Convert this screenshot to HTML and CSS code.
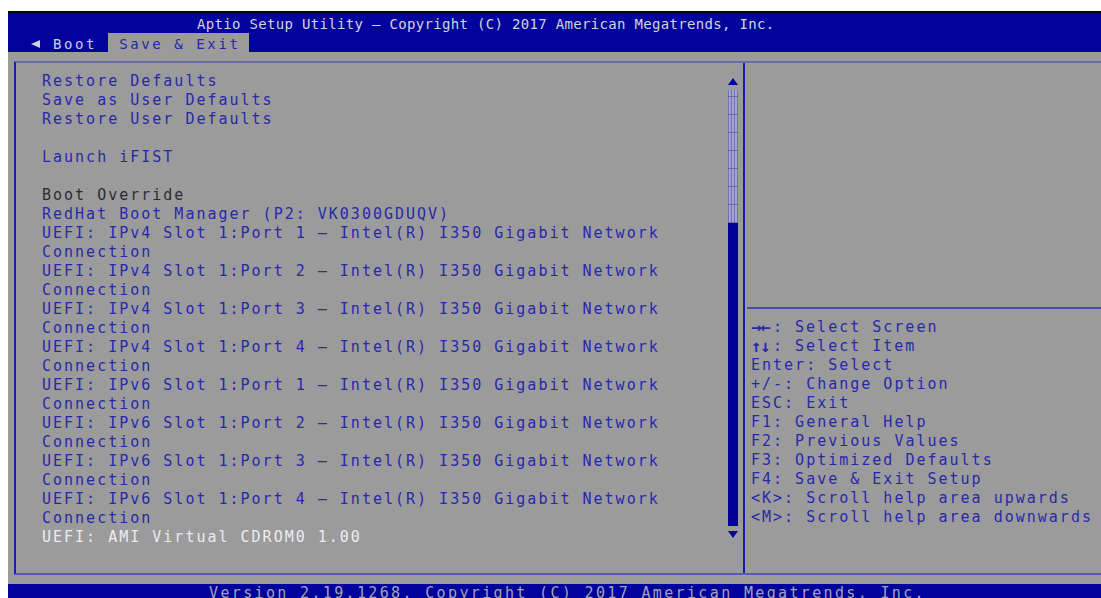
FILE: index.html
```html
<!DOCTYPE html>
<html lang="en">
<head>
<meta charset="utf-8">
<title>Aptio Setup Utility</title>
<link rel="stylesheet" href="styles.css">
</head>
<body>
<div class="screen">
  <header class="header">
    <div class="title">Aptio Setup Utility – Copyright (C) 2017 American Megatrends, Inc.</div>
    <nav class="tabs">
      <span class="tab-prev">
        <svg class="tab-arrow" width="9" height="8" viewBox="0 0 9 8"><polygon points="0,4 9,0 9,8" fill="currentColor"/></svg>
        <span class="tab-label">Boot</span>
      </span>
      <span class="tab-active">Save &amp; Exit</span>
    </nav>
  </header>

  <main class="main">
    <div class="frame">
      <section class="left-panel">
        <div class="menu">
          <ul class="group">
            <li>Restore Defaults</li>
            <li>Save as User Defaults</li>
            <li>Restore User Defaults</li>
          </ul>
          <ul class="group">
            <li>Launch iFIST</li>
          </ul>
          <ul class="group">
            <li class="heading">Boot Override</li>
            <li>RedHat Boot Manager (P2: VK0300GDUQV)</li>
            <li>UEFI: IPv4 Slot 1:Port 1 – Intel(R) I350 Gigabit Network Connection</li>
            <li>UEFI: IPv4 Slot 1:Port 2 – Intel(R) I350 Gigabit Network Connection</li>
            <li>UEFI: IPv4 Slot 1:Port 3 – Intel(R) I350 Gigabit Network Connection</li>
            <li>UEFI: IPv4 Slot 1:Port 4 – Intel(R) I350 Gigabit Network Connection</li>
            <li>UEFI: IPv6 Slot 1:Port 1 – Intel(R) I350 Gigabit Network Connection</li>
            <li>UEFI: IPv6 Slot 1:Port 2 – Intel(R) I350 Gigabit Network Connection</li>
            <li>UEFI: IPv6 Slot 1:Port 3 – Intel(R) I350 Gigabit Network Connection</li>
            <li>UEFI: IPv6 Slot 1:Port 4 – Intel(R) I350 Gigabit Network Connection</li>
            <li class="selected">UEFI: AMI Virtual CDROM0 1.00</li>
          </ul>
        </div>
        <div class="scrollbar">
          <span class="arrow-up"></span>
          <span class="track"></span>
          <span class="thumb"></span>
          <span class="arrow-down"></span>
        </div>
      </section>

      <div class="divider"></div>

      <aside class="right-panel">
        <div class="help-area"></div>
        <div class="separator"></div>
        <ul class="keys">
          <li><span class="arrows">→←</span>: Select Screen</li>
          <li><span class="arrows">↑↓</span>: Select Item</li>
          <li>Enter: Select</li>
          <li>+/-: Change Option</li>
          <li>ESC: Exit</li>
          <li>F1: General Help</li>
          <li>F2: Previous Values</li>
          <li>F3: Optimized Defaults</li>
          <li>F4: Save &amp; Exit Setup</li>
          <li>&lt;K&gt;: Scroll help area upwards</li>
          <li>&lt;M&gt;: Scroll help area downwards</li>
        </ul>
      </aside>
    </div>
  </main>

  <footer class="footer">Version 2.19.1268. Copyright (C) 2017 American Megatrends, Inc.</footer>
</div>
</body>
</html>
```

FILE: styles.css
```css
html, body {
  height: 100%;
}

body {
  margin: 11px 0 0 8px;
  background: #ffffff;
  overflow: hidden;
  font-family: "DejaVu Sans Mono", "Liberation Mono", monospace;
}

ul {
  list-style: none;
  margin: 0;
  padding: 0;
}

.screen {
  width: 1093px;
}

/* ---- top bar ---- */
.header {
  background: #02029c;
  border-top: 2px solid #05050f;
  height: 39px;
}

.title {
  height: 20px;
  box-sizing: border-box;
  padding: 2px 0 0 189px;
  font-size: 14px;
  line-height: 18px;
  letter-spacing: 0.32px;
  color: #d4d4dc;
  white-space: pre;
}

.tabs {
  display: flex;
  height: 19px;
  padding-left: 23px;
  font-size: 14px;
  letter-spacing: 2.6px;
  line-height: 18px;
}

.tab-prev {
  display: flex;
  align-items: center;
  color: #cfcfd8;
}

.tab-arrow {
  display: block;
  margin-top: 2px;
}

.tab-label {
  margin-left: 13px;
  padding-top: 2px;
}

.tab-active {
  margin-left: 11px;
  padding: 2px 9px 0 11px;
  background: #9b9b9b;
  color: #2626ac;
}

/* ---- main area ---- */
.main {
  height: 532px;
  box-sizing: border-box;
  padding: 9px 0 9px 6px;
  background: #9b9b9b;
}

.frame {
  display: grid;
  grid-template-columns: 727px 2px 1fr;
  grid-template-rows: 100%;
  height: 514px;
  box-sizing: border-box;
  overflow: hidden;
  border-top: 2px solid #6a6aa6;
  border-bottom: 2px solid #5a5aac;
  border-left: 2px solid #1c1cae;
  font-size: 15px;
  line-height: 19px;
  letter-spacing: 2px;
}

.left-panel {
  display: flex;
  min-height: 0;
}

.menu {
  flex: 1;
  padding: 9px 0 0 26px;
  color: #2828ac;
}

.group {
  margin-bottom: 19px;
}

.group li {
  padding-right: 20px;
}

.heading {
  color: #2c2c34;
}

.selected {
  color: #ececf0;
}

/* scroll indicator */
.scrollbar {
  display: flex;
  flex-direction: column;
  width: 10px;
  margin: 15px 5px 0 0;
}

.arrow-up,
.arrow-down {
  width: 0;
  height: 0;
  border-left: 5px solid transparent;
  border-right: 5px solid transparent;
}

.arrow-up {
  border-bottom: 7px solid #04049c;
}

.arrow-down {
  margin-top: 5px;
  border-top: 7px solid #04049c;
}

.track {
  margin-top: 5px;
  height: 133px;
  background-color: #8d8dbf;
  background-image:
    repeating-linear-gradient(0deg, rgba(70, 70, 160, 0.55) 0 1px, transparent 1px 18px),
    repeating-linear-gradient(90deg, #7272b6 0 1px, #a4a4c8 1px 3px);
}

.thumb {
  height: 303px;
  background: #01019a;
}

.divider {
  background: #1a1ab0;
}

/* ---- help column ---- */
.right-panel {
  display: flex;
  flex-direction: column;
  min-height: 0;
}

.help-area {
  height: 244px;
  flex: none;
}

.separator {
  height: 2px;
  flex: none;
  margin-left: 2px;
  background: #4c4cb0;
}

.keys {
  padding: 9px 0 0 6px;
  color: #2828ac;
}

.keys li {
  white-space: nowrap;
}

.arrows {
  display: inline-block;
  width: 22px;
  font-size: 17px;
  line-height: 19px;
  letter-spacing: -1px;
  font-weight: bold;
  vertical-align: top;
}

/* ---- bottom bar ---- */
.footer {
  height: 14px;
  overflow: hidden;
  padding-left: 201px;
  background: #02029c;
  color: #a2a2b2;
  font-size: 15px;
  line-height: 19px;
  letter-spacing: 2.35px;
  white-space: pre;
}
```
